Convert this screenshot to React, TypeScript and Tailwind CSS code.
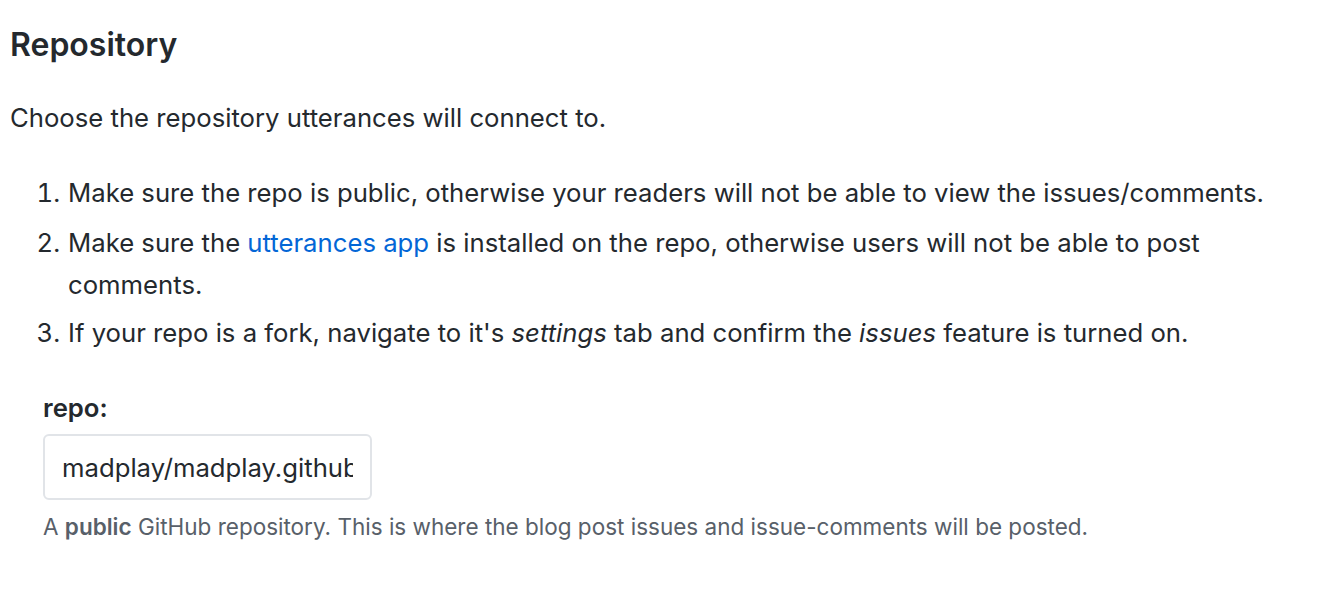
import React from "react";

const App = () => {
  return (
    <div className="min-h-[590px] w-[1332px] bg-white font-['Inter','Liberation_Sans',sans-serif] text-[#24292e]">
      <div className="px-[10px] pt-[24px]">
        <h2 className="text-[32px] font-semibold leading-[42px]">Repository</h2>
        <p className="mt-[34px] text-[25.7px] leading-[36px]">Choose the repository utterances will connect to.</p>
        <ol className="mt-[36px] list-decimal pl-[57px] text-[25.7px] leading-[42px]">
          <li className="pl-[1px]">
            Make sure the repo is public, otherwise your readers will not be able to view the issues/comments.
          </li>
          <li className="mt-[8px] pl-[1px]">
            Make sure the{" "}
            <a href="#" className="text-[#0366d6]">
              utterances app
            </a>{" "}
            is installed on the repo, otherwise users will not be able to post comments.
          </li>
          <li className="mt-[6px] pl-[1px]">
            If your repo is a fork, navigate to it's <em>settings</em> tab and confirm the <em>issues</em> feature is
            turned on.
          </li>
        </ol>
        <div className="mt-[36px] pl-[33px]">
          <label className="block text-[25.7px] font-semibold leading-[36px]">repo:</label>
          <input
            type="text"
            readOnly
            value="madplay/madplay.github.io"
            className="mt-[8px] h-[66px] w-[329px] rounded-[6px] border-2 border-[#e1e4e8] px-[17px] text-[25.7px] text-[#24292e] outline-none"
          />
          <p className="mt-[12px] text-[22.5px] leading-[30px] text-[#586069]">
            A <strong className="font-semibold">public</strong> GitHub repository. This is where the blog post issues and
            issue-comments will be posted.
          </p>
        </div>
      </div>
    </div>
  );
};

export default App;
